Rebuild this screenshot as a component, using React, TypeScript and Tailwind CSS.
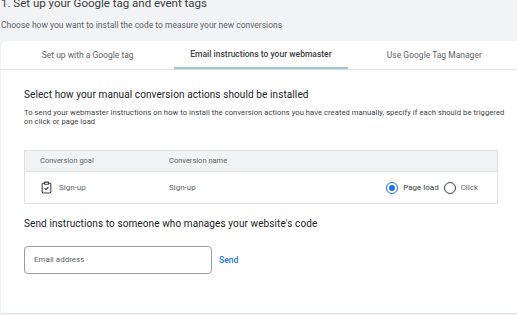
import React from 'react';
import { ClipboardCheck } from 'lucide-react';

const tabs = ['Set up with a Google tag', 'Email instructions to your webmaster', 'Use Google Tag Manager'];

export default function App() {
  return (
    <div className="w-[517px] h-[315px] overflow-hidden bg-[#f1f3f4] font-['Roboto',Arial,sans-serif] text-[#202124]">
      {/* Page header */}
      <h1 className="mt-[-4px] pl-px text-[11.5px] leading-[14px] text-[#3c4043]">1. Set up your Google tag and event tags</h1>
      <p className="mt-[9px] pl-px text-[8.5px] leading-[12px] text-[#5f6368]">
        Choose how you want to install the code to measure your new conversions
      </p>

      {/* Card */}
      <div className="mt-[10px] ml-px w-[520px] h-[273px] bg-white rounded-t-[6px] border-b border-[#e0e0e0]">
        <div className="flex h-[29px] border-b border-[#e0e0e0]">
          {tabs.map((t, i) => (
            <div
              key={t}
              className={`flex-1 flex items-center justify-center text-[8.5px] ${
                i === 1 ? 'font-medium text-[#3c4043] border-b-2 border-[#9fc3d8]' : 'text-[#5f6368]'
              }`}
            >
              {t}
            </div>
          ))}
        </div>

        <div className="pl-[23px] w-[500px]">
          <h2 className="mt-[18px] text-[10px] leading-[14px] tracking-[0.1px] text-[#202124]">
            Select how your manual conversion actions should be installed
          </h2>
          <p className="mt-[6px] w-[490px] text-[7.6px] leading-[9px] tracking-[0.07px] text-[#3c4043] whitespace-nowrap">
            To send your webmaster instructions on how to install the conversion actions you have created manually, specify if each should be triggered
            <br />
            on click or page load
          </p>

          {/* Table */}
          <div className="mt-[24px] w-[474px] border border-[#e0e0e0]">
            <div className="flex items-center h-[20px] bg-[#f1f3f4] text-[7.5px] text-[#5f6368]">
              <div className="w-[144px] pl-[15px]">Conversion goal</div>
              <div>Conversion name</div>
            </div>
            <div className="flex items-center h-[32px] border-t border-[#e0e0e0] text-[8px] text-[#5f6368]">
              <div className="w-[144px] pl-[15px] flex items-center gap-[6px]">
                <ClipboardCheck size={13} strokeWidth={2} className="text-[#3c4043]" />
                <span>Sign-up</span>
              </div>
              <div className="flex-1">Sign-up</div>
              <div className="flex items-center pr-[19px]">
                <span className="w-[12px] h-[12px] rounded-full border-[1.5px] border-[#1a73e8] flex items-center justify-center">
                  <span className="w-[6px] h-[6px] rounded-full bg-[#1a73e8]" />
                </span>
                <span className="ml-[5px] text-[#3c4043]">Page load</span>
                <span className="ml-[5px] w-[12px] h-[12px] rounded-full border-[1.5px] border-[#3c4043]" />
                <span className="ml-[5px]">Click</span>
              </div>
            </div>
          </div>

          <h2 className="mt-[13px] text-[10px] leading-[14px] tracking-[0.1px] text-[#202124]">
            Send instructions to someone who manages your website's code
          </h2>

          <div className="mt-[15px] flex items-center">
            <div className="w-[188px] h-[28px] rounded-[4px] border border-[#9aa0a6] flex items-center pl-[9px] text-[8px] text-[#5f6368]">
              Email address
            </div>
            <span className="ml-[7px] text-[8.5px] font-medium text-[#1a73e8]">Send</span>
          </div>
        </div>
      </div>
    </div>
  );
}
